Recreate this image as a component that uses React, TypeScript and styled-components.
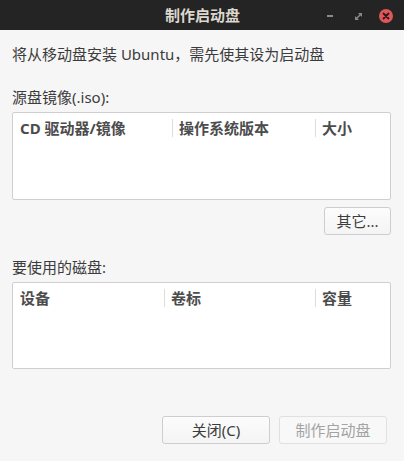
import React from 'react';
import styled, { createGlobalStyle } from 'styled-components';

const GlobalStyle = createGlobalStyle`
  html, body {
    margin: 0;
    padding: 0;
    background: #f6f6f6;
  }
  body {
    font-family: "Noto Sans", "Noto Sans CJK SC", sans-serif;
  }
`;

type Column = { title: string; width: number };

const sourceColumns: Column[] = [
  { title: 'CD 驱动器/镜像', width: 159 },
  { title: '操作系统版本', width: 143 },
  { title: '大小', width: 0 },
];

const diskColumns: Column[] = [
  { title: '设备', width: 151 },
  { title: '卷标', width: 151 },
  { title: '容量', width: 0 },
];

function App() {
  return (
    <>
      <GlobalStyle />
      <Window>
        <TitleBar>
          <Title>制作启动盘</Title>
          <Controls>
            <MinimizeBtn />
            <MaximizeBtn>
              <svg width="7" height="7" viewBox="0 0 7 7">
                <path d="M3 0H7V4Z M0 3V7H4Z" fill="#8a8a8a" />
                <path d="M1.5 5.5L5.5 1.5" stroke="#8a8a8a" strokeWidth="1.4" />
              </svg>
            </MaximizeBtn>
            <CloseBtn>
              <svg width="8" height="8" viewBox="0 0 8 8">
                <path d="M1.5 1.5L6.5 6.5M6.5 1.5L1.5 6.5" stroke="#2a1a1a" strokeWidth="1.8" strokeLinecap="round" />
              </svg>
            </CloseBtn>
          </Controls>
        </TitleBar>
        <Body>
          <Intro>将从移动盘安装 Ubuntu，需先使其设为启动盘</Intro>
          <Label $top={9}>源盘镜像(.iso):</Label>
          <ListBox $height={88}>
            <HeaderRow>
              {sourceColumns.map((c, i) => (
                <HeaderCell key={c.title} $width={c.width} $first={i === 0}>
                  {c.title}
                </HeaderCell>
              ))}
            </HeaderRow>
          </ListBox>
          <OtherRow>
            <Button $width={67}>其它...</Button>
          </OtherRow>
          <Label $top={8}>要使用的磁盘:</Label>
          <ListBox $height={87}>
            <HeaderRow>
              {diskColumns.map((c, i) => (
                <HeaderCell key={c.title} $width={c.width} $first={i === 0}>
                  {c.title}
                </HeaderCell>
              ))}
            </HeaderRow>
          </ListBox>
        </Body>
        <Footer>
          <Button $width={108}>关闭(C)</Button>
          <Button $width={108} disabled>
            制作启动盘
          </Button>
        </Footer>
      </Window>
    </>
  );
}

const Window = styled.div`
  width: 404px;
  height: 461px;
  background: #f6f6f6;
  display: flex;
  flex-direction: column;
  overflow: hidden;
`;

const TitleBar = styled.div`
  height: 30px;
  background: #242424;
  display: flex;
  align-items: center;
  justify-content: center;
  position: relative;
  flex-shrink: 0;
`;

const Title = styled.div`
  color: #dcd8cf;
  font-weight: 700;
  font-size: 15px;
  line-height: 20px;
  margin-left: 1px;
`;

const Controls = styled.div`
  position: absolute;
  right: 11px;
  top: 0;
  height: 30px;
  display: flex;
  align-items: center;
  gap: 0;
`;

const MinimizeBtn = styled.div`
  width: 6px;
  height: 2px;
  background: #8a8a8a;
  margin-right: 22px;
  margin-top: 2px;
`;

const MaximizeBtn = styled.div`
  width: 7px;
  height: 7px;
  display: flex;
  margin-right: 17px;
  margin-top: 2px;
`;

const CloseBtn = styled.div`
  width: 14px;
  height: 14px;
  border-radius: 50%;
  background: #e0565a;
  display: flex;
  align-items: center;
  justify-content: center;
  margin-top: 2px;
`;

const Body = styled.div`
  padding: 14px 13px 0 12px;
  display: flex;
  flex-direction: column;
  color: #3c3c3c;
  font-size: 15px;
`;

const Intro = styled.div`
  line-height: 20px;
`;

const Label = styled.div<{ $top: number }>`
  line-height: 20px;
  margin-top: ${(p) => p.$top}px;
  margin-bottom: 0;
  padding-top: 14px;
`;

const ListBox = styled.div<{ $height: number }>`
  margin-top: 5px;
  height: ${(p) => p.$height}px;
  box-sizing: border-box;
  background: #ffffff;
  border: 1px solid #cfcfcf;
  border-radius: 2px;
`;

const HeaderRow = styled.div`
  display: flex;
  padding-top: 6px;
  height: 18px;
`;

const HeaderCell = styled.div<{ $width: number; $first: boolean }>`
  ${(p) => (p.$width ? `width: ${p.$width}px;` : 'flex: 1;')}
  flex-shrink: 0;
  box-sizing: border-box;
  padding-left: ${(p) => (p.$first ? 7 : 6)}px;
  border-left: ${(p) => (p.$first ? 'none' : '1px solid #dcdcdc')};
  font-weight: 700;
  color: #4c4c4c;
  font-size: 15px;
  line-height: 18px;
  white-space: nowrap;
`;

const OtherRow = styled.div`
  display: flex;
  justify-content: flex-end;
  margin-top: 7px;
`;

const Button = styled.button<{ $width: number }>`
  width: ${(p) => p.$width}px;
  height: 28px;
  box-sizing: border-box;
  border: 1px solid #cdcdcd;
  border-radius: 3px;
  background: linear-gradient(#fcfcfc, #f4f4f4);
  color: #3c3c3c;
  font-family: "Noto Sans", "Noto Sans CJK SC", sans-serif;
  font-size: 15px;
  padding: 0;
  line-height: 20px;

  &:disabled {
    color: #a3a3a3;
    border-color: #e0e0e0;
    background: #f8f8f8;
  }
`;

const Footer = styled.div`
  margin-top: auto;
  display: flex;
  justify-content: flex-end;
  gap: 9px;
  padding: 0 17px 17px 0;
`;

export default App;
